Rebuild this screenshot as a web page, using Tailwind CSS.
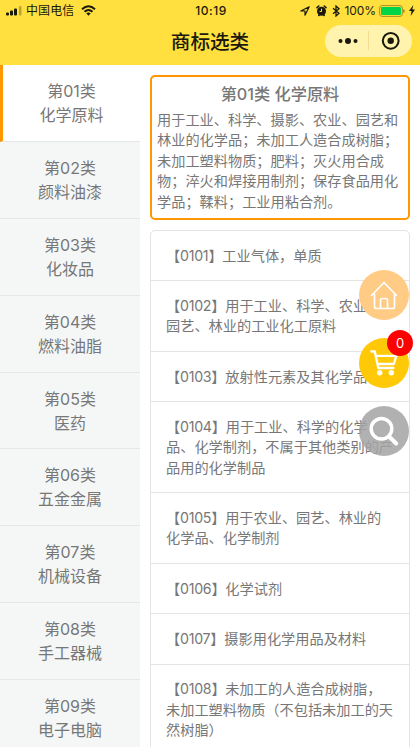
<!DOCTYPE html>
<html lang="zh-CN">
<head>
<meta charset="utf-8">
<meta name="viewport" content="width=device-width, initial-scale=1">
<title>商标选类</title>
<script src="https://cdn.jsdelivr.net/npm/@tailwindcss/browser@4"></script>
</head>
<body class="relative w-[420px] h-[747px] overflow-hidden bg-white text-[#777777] font-['Inter','Noto_Sans_CJK_SC',sans-serif] [text-spacing-trim:space-all]">
<header class="h-[65px] bg-[#ffe03f] text-[#1b190c]">
  <div class="grid grid-cols-[1fr_auto_1fr] items-center h-[21px] pl-[6px] pr-[5px] text-[12px] leading-[21px]">
    <div class="flex items-center">
      <svg class="w-[17px] h-[10px]" viewBox="0 0 17 10" fill="currentColor"><rect y="6.5" width="3" height="3" rx="1"/><rect x="4" y="4.5" width="3" height="5" rx="1"/><rect x="8" y="2.5" width="3" height="7" rx="1"/><rect x="13" y="0" width="2.5" height="9.5" rx="1" opacity=".3"/></svg>
      <span class="ml-[3px] tracking-[0.1px]">中国电信</span>
      <svg class="ml-[7px] w-[15px] h-[11px]" viewBox="0 0 15 11" fill="none" stroke="currentColor" stroke-width="2"><path d="M1 4.2Q7.5-1.8 14 4.2M3.5 6.8Q7.5 3.2 11.5 6.8"/><path d="M5.3 8.3Q7.5 6.5 9.7 8.3L7.5 10.8Z" fill="currentColor" stroke="none"/></svg>
    </div>
    <span class="font-medium text-[12px] tracking-[0.5px] pl-[1px]">10:19</span>
    <div class="flex items-center justify-end">
      <svg class="w-[10px] h-[10px]" viewBox="0 0 10 10" fill="none" stroke="currentColor" stroke-width="1.2" stroke-linejoin="round"><path d="M9.2.8L.8 5H5v4.2Z"/></svg>
      <svg class="ml-[6px] w-[11px] h-[12px]" viewBox="0 0 11 12"><g fill="none" stroke="currentColor" stroke-width="1.6" stroke-linecap="round"><path d="M1 2.6L2.8 1M10 2.6L8.2 1M2.8 10.5l.4-.5M8.2 10.5l-.4-.5"/></g><circle cx="5.5" cy="6.3" r="4.5" fill="currentColor"/><path d="M5.5 3.7v2.8H3.6" fill="none" stroke="#ffe03f"/></svg>
      <svg class="ml-[5px] w-[8px] h-[12px]" viewBox="0 0 8 12" fill="none" stroke="currentColor" stroke-width="1.3"><path d="M1 3.3l6 5L4 11V1l3 2.7-6 5"/></svg>
      <span class="ml-[5px] text-[12px] tracking-[-0.1px]">100%</span>
      <svg class="ml-[3px] w-[26px] h-[12px]" viewBox="0 0 26 12"><rect x=".6" y=".6" width="22.8" height="10.8" rx="2.5" fill="none" stroke="#aa8e24"/><rect x="2" y="2" width="20" height="8" rx="1" fill="#00d449"/><path d="M24.3 4v4q1.4-.5 1.4-2t-1.4-2Z" fill="#8c761d"/></svg>
      <svg class="ml-[4px] w-[6px] h-[11px]" viewBox="0 0 6 11" fill="currentColor"><path d="M4.3 0L0 6h2.6L1.6 11 6 4.6H3.3Z"/></svg>
    </div>
  </div>
  <div class="grid grid-cols-[1fr_auto_1fr] items-center h-[40px] pr-[8px] pl-[8px]">
    <span></span>
    <h1 class="text-[19.6px] leading-[30px] font-medium pt-[2px]">商标选类</h1>
    <div class="justify-self-end flex items-center w-[87px] h-[32px] rounded-full bg-[#fff3ae]">
      <svg class="w-[87px] h-[32px]" viewBox="0 0 87 32" fill="currentColor"><circle cx="15.5" cy="16" r="2"/><circle cx="23" cy="16" r="3"/><circle cx="30.5" cy="16" r="2"/><path d="M43.5 6v19" stroke="#f4dc93"/><circle cx="65.7" cy="15.8" r="7.9" fill="none" stroke="currentColor" stroke-width="2"/><circle cx="65.7" cy="15.8" r="3.2"/></svg>
    </div>
  </div>
</header>
<main class="flex h-[682px] overflow-hidden">
  <nav class="w-[140px] shrink-0 bg-[#f5f7f7] text-center text-[16px] leading-[24px] [&>div]:h-[76.9px] [&>div]:pt-[14px] [&>div]:border-b [&>div]:border-b-[#e4e7e7]">
    <div class="bg-white border-l-[3px] border-l-[#ff9800]">第01类<br>化学原料</div>
    <div>第02类<br>颜料油漆</div>
    <div>第03类<br>化妆品</div>
    <div>第04类<br>燃料油脂</div>
    <div>第05类<br>医药</div>
    <div>第06类<br>五金金属</div>
    <div>第07类<br>机械设备</div>
    <div>第08类<br>手工器械</div>
    <div>第09类<br>电子电脑</div>
  </nav>
  <section class="w-[260px] ml-[10px] pt-[10px] shrink-0 text-[14.2px] leading-[20.4px] whitespace-nowrap">
    <div class="h-[145px] border-2 border-[#ff9800] rounded-[5px] pl-[5px] pt-[5px]">
      <h2 class="text-center text-[16.2px] leading-[24px] font-medium pr-[5px] mb-[4px]">第01类 化学原料</h2>
      <p>用于工业、科学、摄影、农业、园艺和<br>林业的化学品；未加工人造合成树脂；<br>未加工塑料物质；肥料；灭火用合成<br>物；淬火和焊接用制剂；保存食品用化<br>学品；鞣料；工业用粘合剂。</p>
    </div>
    <div class="mt-[10px] h-[540px] border border-[#e4e4e4] rounded-[5px] [&>div]:border-b [&>div]:border-[#e4e4e4] [&>div]:pl-[15px] [&>div]:pt-[14.5px] [&>div]:pb-[14.4px] [&_span]:tracking-[-0.25px]">
      <div><span>【0101】</span>工业气体，单质</div>
      <div><span>【0102】</span>用于工业、科学、农业、<br>园艺、林业的工业化工原料</div>
      <div><span>【0103】</span>放射性元素及其化学品</div>
      <div><span>【0104】</span>用于工业、科学的化学<br>品、化学制剂，不属于其他类别的产<br>品用的化学制品</div>
      <div><span>【0105】</span>用于农业、园艺、林业的<br>化学品、化学制剂</div>
      <div><span>【0106】</span>化学试剂</div>
      <div><span>【0107】</span>摄影用化学用品及材料</div>
      <div><span>【0108】</span>未加工的人造合成树脂，<br>未加工塑料物质（不包括未加工的天<br>然树脂）</div>
    </div>
  </section>
</main>
<aside class="absolute left-[359px] top-[269.5px] flex flex-col gap-[18px]">
  <div class="size-[50px] rounded-full bg-[#ffcb85]">
    <svg class="size-[50px]" viewBox="0 0 50 50" fill="none" stroke="#fff" stroke-width="1.7" stroke-linecap="round" stroke-linejoin="round"><path d="M12.5 25.5L25 12.5L37.5 25.5M15.5 24V36.5Q15.5 38.5 17.5 38.5H33.5Q35.5 38.5 35.5 36.5V24M21.5 38V30.5Q21.5 28.5 23.5 28.5H26.5Q28.5 28.5 28.5 30.5V38"/></svg>
  </div>
  <div class="relative size-[50px] rounded-full bg-[#ffc907]">
    <svg class="size-[50px]" viewBox="0 0 50 50" fill="none" stroke="#fff" stroke-width="2.3" stroke-linecap="round" stroke-linejoin="round"><path d="M12.3 13.5H15.8L19.3 30H34.5M16.7 17.8H37.3L34.8 26H18.8"/><circle cx="20.7" cy="34.8" r="2.7" fill="#fff" stroke="none"/><circle cx="32.3" cy="34.8" r="2.7" fill="#fff" stroke="none"/></svg>
    <span class="absolute left-[28px] top-[-8px] size-[26px] rounded-full bg-[#ff0000] text-white text-center text-[13px] leading-[26px]">0</span>
  </div>
  <div class="size-[50px] rounded-full bg-[#a3a3a3]/85">
    <svg class="size-[50px]" viewBox="0 0 50 50" fill="none" stroke="#fff" stroke-width="3.5" stroke-linecap="round"><circle cx="22.5" cy="22.8" r="10.3"/><path d="M30 30.5L37.2 37.5" stroke-width="4"/></svg>
  </div>
</aside>
</body>
</html>
